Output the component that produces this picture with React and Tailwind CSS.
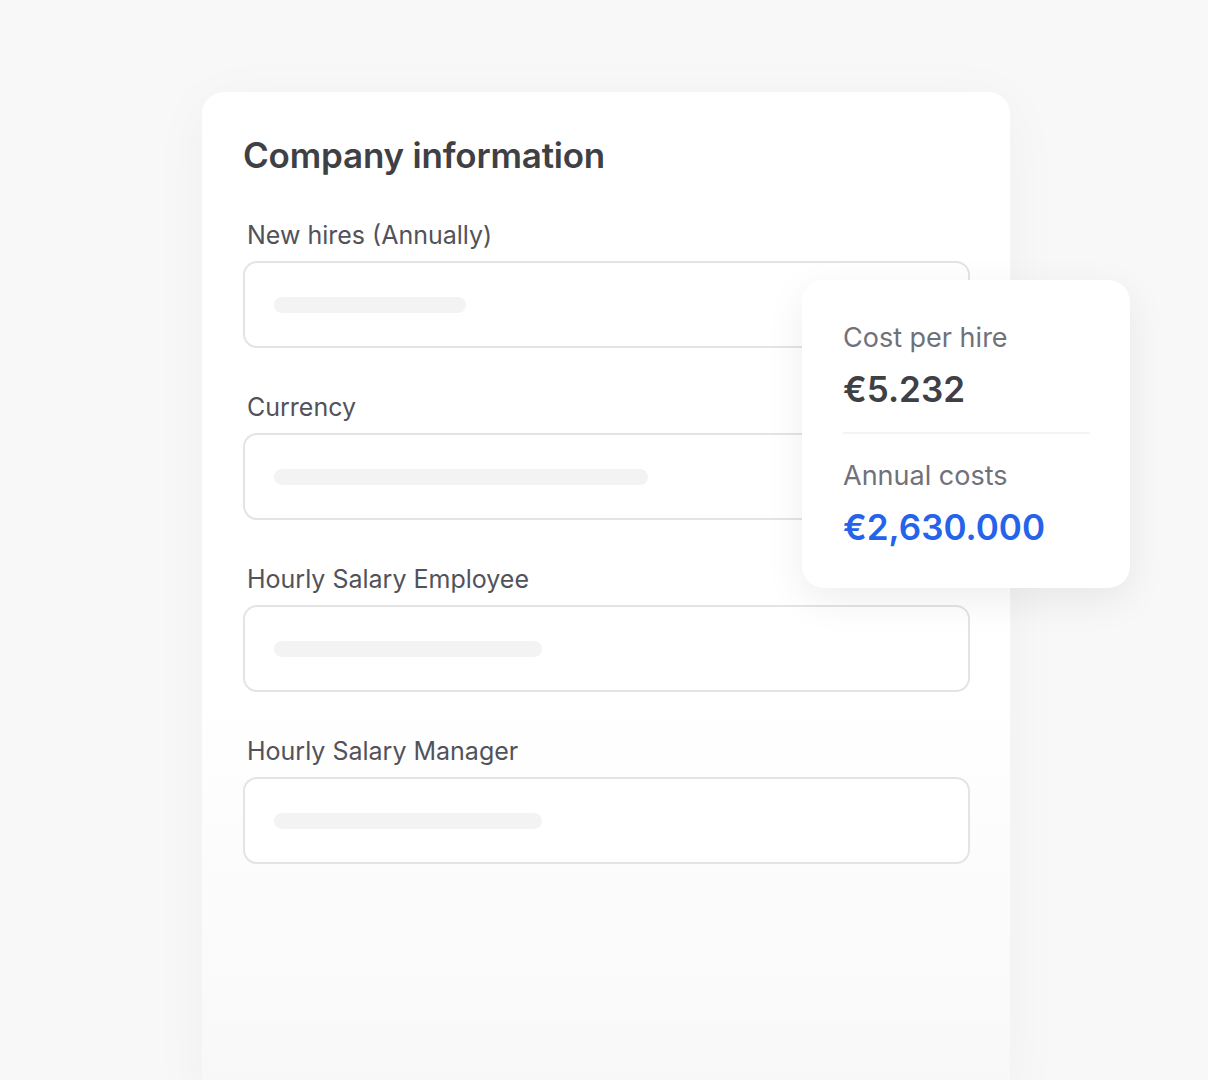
export default function App() {
  const fields = [
    { label: "New hires (Annually)", bar: "w-[192px]" },
    { label: "Currency", bar: "w-[374px]" },
    { label: "Hourly Salary Employee", bar: "w-[268px]" },
    { label: "Hourly Salary Manager", bar: "w-[268px]" },
  ];

  return (
    <div className="relative w-[1208px] h-[1080px] overflow-hidden bg-[#f8f8f8] font-['Inter',sans-serif]">
      <div className="ml-[202px] mt-[92px] w-[808px] h-[1000px] rounded-t-[22px] bg-gradient-to-b from-white via-white via-60% to-[#f8f8f8] shadow-[0_10px_60px_rgba(0,0,0,0.04)] pl-[41px] pr-[40px] pt-[41px]">
        <h1 className="text-[35px] leading-[44px] font-semibold text-[#3f3f46] tracking-[-0.2px]">Company information</h1>
        <div className="mt-[42px] flex flex-col gap-[43px]">
          {fields.map((f, i) => (
            <div key={i} className="flex flex-col gap-[10px]">
              <label className="pl-1 text-[25px] leading-[32px] text-[#52525b]">{f.label}</label>
              <div className="h-[87px] w-[727px] rounded-[14px] border-2 border-[#e4e4e7] bg-white flex items-center pl-[29px]">
                <div className={`h-4 rounded-full bg-[#f3f3f4] ${f.bar}`} />
              </div>
            </div>
          ))}
        </div>
      </div>

      <div className="absolute left-[802px] top-[280px] w-[328px] h-[308px] rounded-[22px] bg-white shadow-[0_12px_40px_rgba(0,0,0,0.07)] px-[41px] pt-[40px]">
        <div className="text-[27px] leading-[36px] text-[#71717a]">Cost per hire</div>
        <div className="mt-[11px] text-[35px] leading-[44px] font-semibold text-[#3f3f46]">€5.232</div>
        <div className="mt-[21px] h-[2px] w-[247px] bg-[#f4f4f5]" />
        <div className="mt-[24px] text-[27px] leading-[36px] text-[#71717a]">Annual costs</div>
        <div className="mt-[11px] text-[35px] leading-[44px] font-semibold text-[#2563eb]">€2,630.000</div>
      </div>
    </div>
  );
}
